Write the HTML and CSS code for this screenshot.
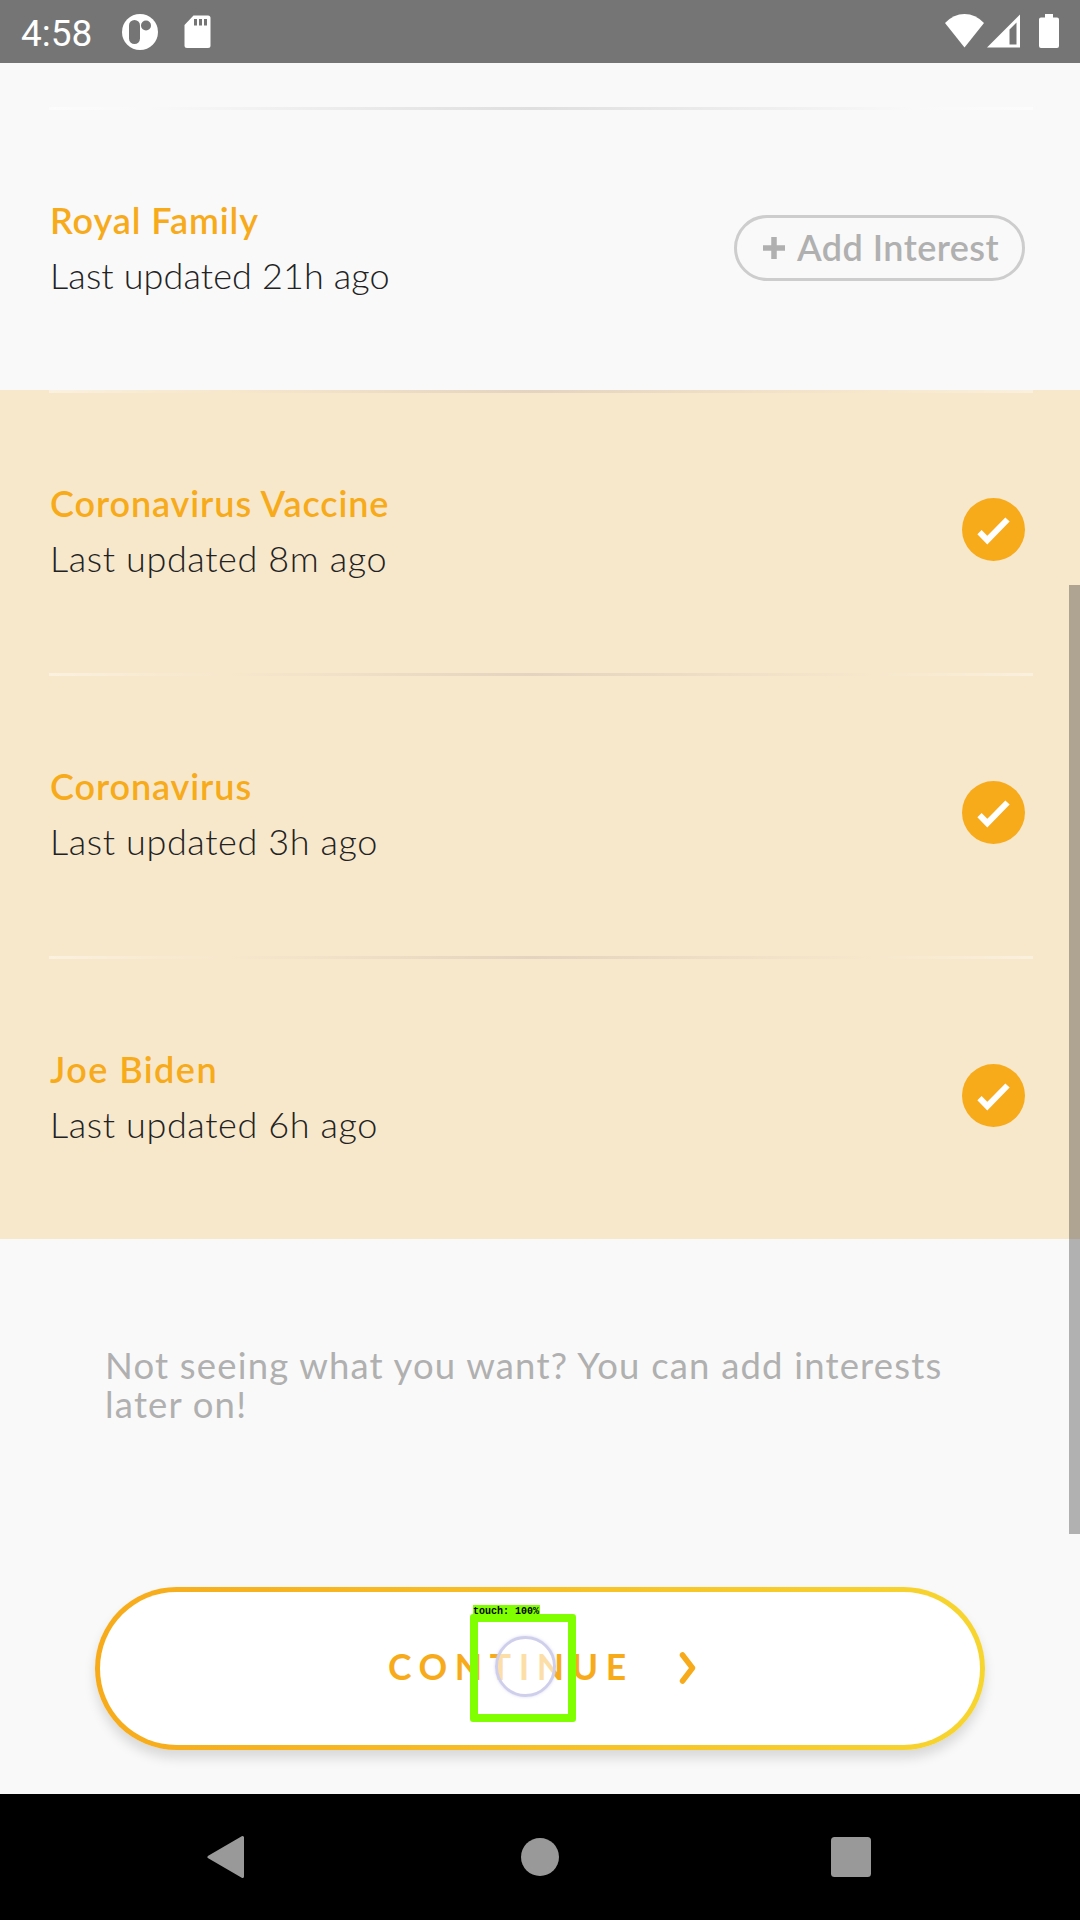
FILE: index.html
```
<!DOCTYPE html>
<html lang="en">
<head>
<meta charset="utf-8">
<title>Interests</title>
<link rel="stylesheet" href="styles.css">
</head>
<body>
<div class="screen">
  <header class="status">
    <span class="clock">4:58</span>
    <svg class="app-icon" width="36" height="36" viewBox="0 0 36 36"><circle cx="18" cy="18" r="18" fill="#fff"/><rect x="7" y="6" width="11" height="24" rx="5.5" fill="#757575"/><circle cx="24" cy="11.500" r="5" fill="#757575"/></svg>
    <svg class="sd-icon" width="27" height="34" viewBox="0 0 27 34"><path d="M9.500 0.500H24Q26.500 .5 26.500 3V30.500Q26.500 33 24 33H3Q.5 33 .5 30.500V10Z" fill="#fff"/><path d="M10 4h3v6.500h-3zM15 4h3v6.500h-3zM20 4h3v6.500h-3z" fill="#757575"/></svg>
    <span class="spacer"></span>
    <svg width="39" height="34" viewBox="0 0 39 34"><path d="M0 9Q8.500 0 19.500 0T39 9L19.500 33.500Z" fill="#fff"/></svg>
    <svg class="signal" width="33" height="34" viewBox="0 0 33 34"><path fill-rule="evenodd" d="M0 33.500 33 .5V33.500ZM22.500 15.500V30.500H29.500V8.500Z" fill="#fff"/></svg>
    <svg class="battery" width="20" height="34" viewBox="0 0 20 34"><path d="M6 0h8v3.500h4q2 0 2 2v26.500q0 2-2 2H2q-2 0-2-2V5.500q0-2 2-2h4z" fill="#fff"/></svg>
  </header>

  <main class="content">
    <section class="row first">
      <div class="labels"><h2>Royal Family</h2><p class="updated narrow">Last updated 21h ago</p></div>
      <button class="add"><svg width="22" height="22" viewBox="0 0 22 22"><path d="M11 0V22M0 11H22" stroke="#b0b0b0" stroke-width="5.500"/></svg><span>Add Interest</span></button>
    </section>
    <section class="row selected">
      <div class="labels"><h2>Coronavirus Vaccine</h2><p class="updated">Last updated 8m ago</p></div>
      <svg class="check" width="63" height="63" viewBox="0 0 63 63"><circle cx="31.500" cy="31.500" r="31.500" fill="#f7ab1b"/><path d="M17.500 34.200 25.300 42.200 45.500 21.500" fill="none" stroke="#fff" stroke-width="6"/></svg>
    </section>
    <section class="row selected">
      <div class="labels"><h2>Coronavirus</h2><p class="updated">Last updated 3h ago</p></div>
      <svg class="check" width="63" height="63" viewBox="0 0 63 63"><circle cx="31.500" cy="31.500" r="31.500" fill="#f7ab1b"/><path d="M17.500 34.200 25.300 42.200 45.500 21.500" fill="none" stroke="#fff" stroke-width="6"/></svg>
    </section>
    <section class="row selected">
      <div class="labels"><h2 class="wide">Joe Biden</h2><p class="updated">Last updated 6h ago</p></div>
      <svg class="check" width="63" height="63" viewBox="0 0 63 63"><circle cx="31.500" cy="31.500" r="31.500" fill="#f7ab1b"/><path d="M17.500 34.200 25.300 42.200 45.500 21.500" fill="none" stroke="#fff" stroke-width="6"/></svg>
    </section>
    <p class="note">Not seeing what you want? You can add interests<br>later on!</p>
    <button class="continue">
      <span>CONTINUE</span>
      <svg width="18" height="34" viewBox="0 0 18 34"><path d="M3.500 4 13.500 17 3.500 30" fill="none" stroke="#f7ab1b" stroke-width="5.500" stroke-linecap="round" stroke-linejoin="round"/></svg>
      <span class="touch"><span class="touch-label">touch: 100%</span><span class="touch-ring"></span></span>
    </button>
    <div class="scrollbar"></div>
  </main>

  <nav class="nav">
    <svg width="38" height="44" viewBox="0 0 38 44"><path d="M2 22 35.500 2.500V41.500Z" fill="#999" stroke="#999" stroke-width="3" stroke-linejoin="round"/></svg>
    <svg width="38" height="38" viewBox="0 0 38 38"><circle cx="19" cy="19" r="19" fill="#999"/></svg>
    <svg width="40" height="40" viewBox="0 0 40 40"><rect width="40" height="40" rx="3.500" fill="#999"/></svg>
  </nav>
</div>
</body>
</html>
```
FILE: styles.css
```
* { box-sizing: border-box; }
body { margin: 0; font-family: Lato, "Open Sans", sans-serif; background: #f9f9f9; }
h2, p { margin: 0; font-size: 36px; }
button { font-family: inherit; margin: 0; padding: 0; }
svg { display: block; flex: none; }
.screen { width: 1080px; height: 1920px; display: flex; flex-direction: column; overflow: hidden; }

.status { height: 63px; flex: none; background: #757575; display: flex; align-items: flex-start; padding: 14px 21px 0; }
.clock { font: 37px/40px Roboto, sans-serif; color: #fff; width: 101px; }
.sd-icon { margin: 1px 0 0 26px; }
.spacer { flex: 1; }
.signal { margin-left: 3px; }
.battery { margin-left: 19px; }

.content { position: relative; flex: 1; display: flex; flex-direction: column; padding-top: 44px; }
.row { height: 283px; flex: none; display: flex; flex-wrap: wrap; justify-content: space-between; align-items: flex-start; align-content: flex-start; padding: 0 55px 0 49px; }
.row::before { content: ""; flex: none; width: 984px; height: 3px; margin: 0 -8px 82px 0; background: linear-gradient(90deg, rgba(255,255,255,.4), rgba(255,255,255,.1) 11%, rgba(190,170,165,0) 18%, rgba(190,170,165,.33) 49%, rgba(190,170,165,0) 84%, rgba(255,255,255,.12) 90%, rgba(255,255,255,.36)); }
.first::before { background: linear-gradient(90deg, #fcfcfc, #f9f9f9 10%, #dfdfdf 49%, #f9f9f9 88%, #fcfcfc); }
.selected { background: #f7e8cc; }
.row h2 { font-weight: 600; line-height: 57px; letter-spacing: .9px; color: #f7ab1b; }
.row .wide { letter-spacing: 1.45px; }
.labels { padding-left: 1px; }
.updated { font-weight: 300; line-height: 53px; letter-spacing: .6px; color: #222; }
.narrow { letter-spacing: .12px; }
.check { margin-top: 23px; }
.add { margin-top: 23px; width: 291px; height: 66px; border: 3px solid #cdcdcd; border-radius: 33px; background: none; color: #b0b0b0; display: flex; align-items: center; padding-left: 26px; gap: 12px; font-size: 36px; font-weight: 600; letter-spacing: .45px; line-height: 58px; }
.add span { padding-bottom: 2px; }

.note { margin: 107px 0 0 105px; font-size: 36.5px; line-height: 39px; letter-spacing: 1.18px; color: #b0b0b0; }
.continue { position: relative; width: 890px; height: 163px; flex: none; margin: 163px 0 0 95px; border: 5px solid transparent; border-radius: 82px; background: linear-gradient(#fff, #fff) padding-box, linear-gradient(90deg, #f7ab1b, #f7d52f) border-box; box-shadow: 0 8px 12px rgba(0,0,0,.13); display: flex; align-items: center; padding: 0 0 4px 288px; color: #f7ab1b; font-size: 35.5px; font-weight: 700; letter-spacing: 7.6px; line-height: 44px; }
.continue svg { margin: 2px 0 0 45px; }
.touch { position: absolute; left: 370px; top: 22px; width: 106px; height: 108px; border: 8px solid #80ff00; border-radius: 3px; }
.touch-label { position: absolute; left: -5px; top: -17px; width: 67px; height: 12px; background: #80ff00; color: #000; font: 700 10px/14px "Liberation Mono", monospace; letter-spacing: 0; white-space: nowrap; text-align: left; }
.touch-ring { position: absolute; left: 17px; top: 14px; width: 61px; height: 61px; border-radius: 50%; border: 3px solid #cfcfec; background: rgba(255,255,255,.62); box-shadow: 0 0 3px rgba(190,190,235,.6); }
.scrollbar { position: absolute; right: 0; top: 522px; width: 11px; height: 949px; background: rgba(0,0,0,.29); }

.nav { height: 126px; flex: none; background: #000; display: flex; align-items: center; justify-content: space-between; padding: 0 209px 0 207px; }
.nav svg:nth-child(2) { margin-left: 3px; }
```
